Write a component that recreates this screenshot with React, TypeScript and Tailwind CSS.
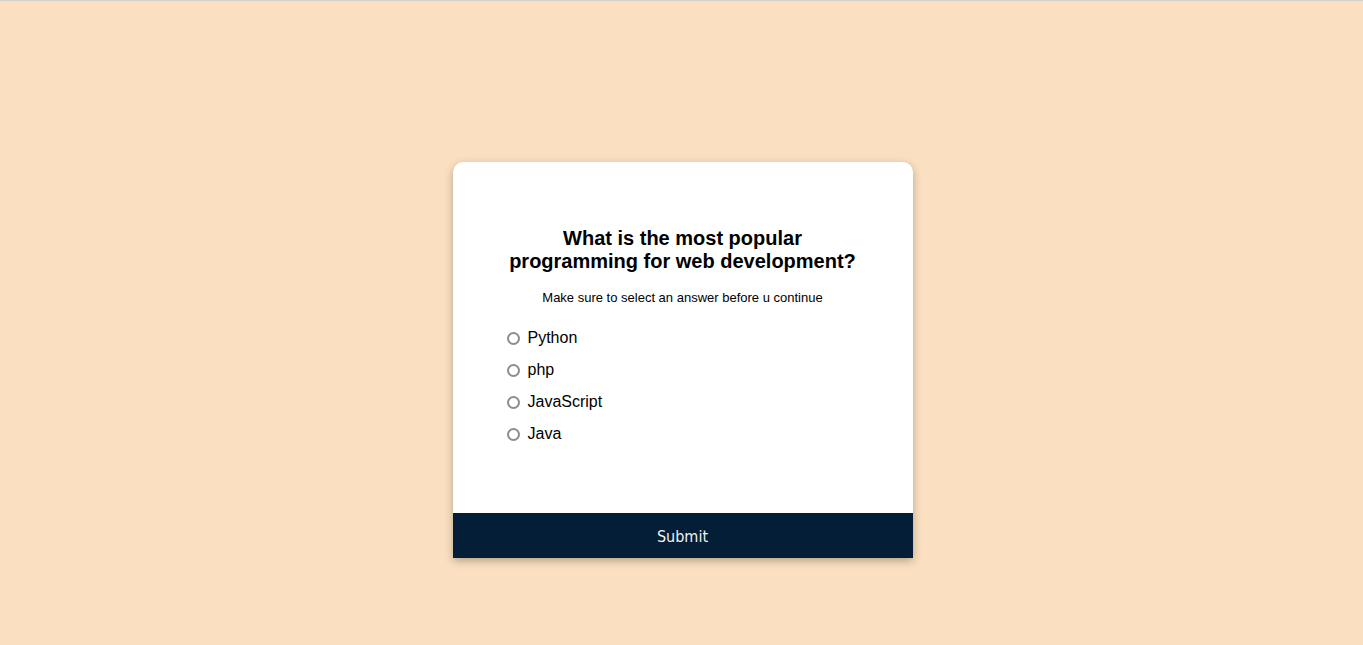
import React, { useState } from "react";

const options = ["Python", "php", "JavaScript", "Java"];

export default function App() {
  const [answer, setAnswer] = useState<string>("");

  return (
    <div className="min-h-screen bg-[#fae0c0] border-t border-[#d3d0cc] flex justify-center pt-[161px] pl-[2px] font-['Liberation_Sans',Arial,sans-serif]">
      <div className="w-[460px] h-[396px] bg-white rounded-t-[10px] shadow-[0_3px_8px_rgba(0,0,0,0.28)] flex flex-col overflow-hidden">
        <div className="flex-1 px-[54px] pt-[65px]">
          <h2 className="text-[20px] leading-[23px] font-bold text-black text-center">
            What is the most popular programming for web development?
          </h2>
          <p className="mt-[17px] text-[13px] leading-[15px] text-black text-center">
            Make sure to select an answer before u continue
          </p>
          <ul className="mt-[17px]">
            {options.map((opt) => (
              <li key={opt} className="h-8 flex items-center">
                <label className="flex items-center gap-[8px] cursor-pointer">
                  <input
                    type="radio"
                    name="answer"
                    value={opt}
                    checked={answer === opt}
                    onChange={() => setAnswer(opt)}
                    className="appearance-none m-0 w-[13px] h-[13px] rounded-full border-2 border-[#8d8d8d] bg-white checked:border-[4px] checked:border-[#1a73e8]"
                  />
                  <span className="text-[16px] leading-[18px] text-black">{opt}</span>
                </label>
              </li>
            ))}
          </ul>
        </div>
        <button className="h-[45px] w-full bg-[#031e36] text-[#f2f2f2] text-[16px] pt-[3px] font-['DejaVu_Sans_Condensed',Tahoma,sans-serif]">
          Submit
        </button>
      </div>
    </div>
  );
}
